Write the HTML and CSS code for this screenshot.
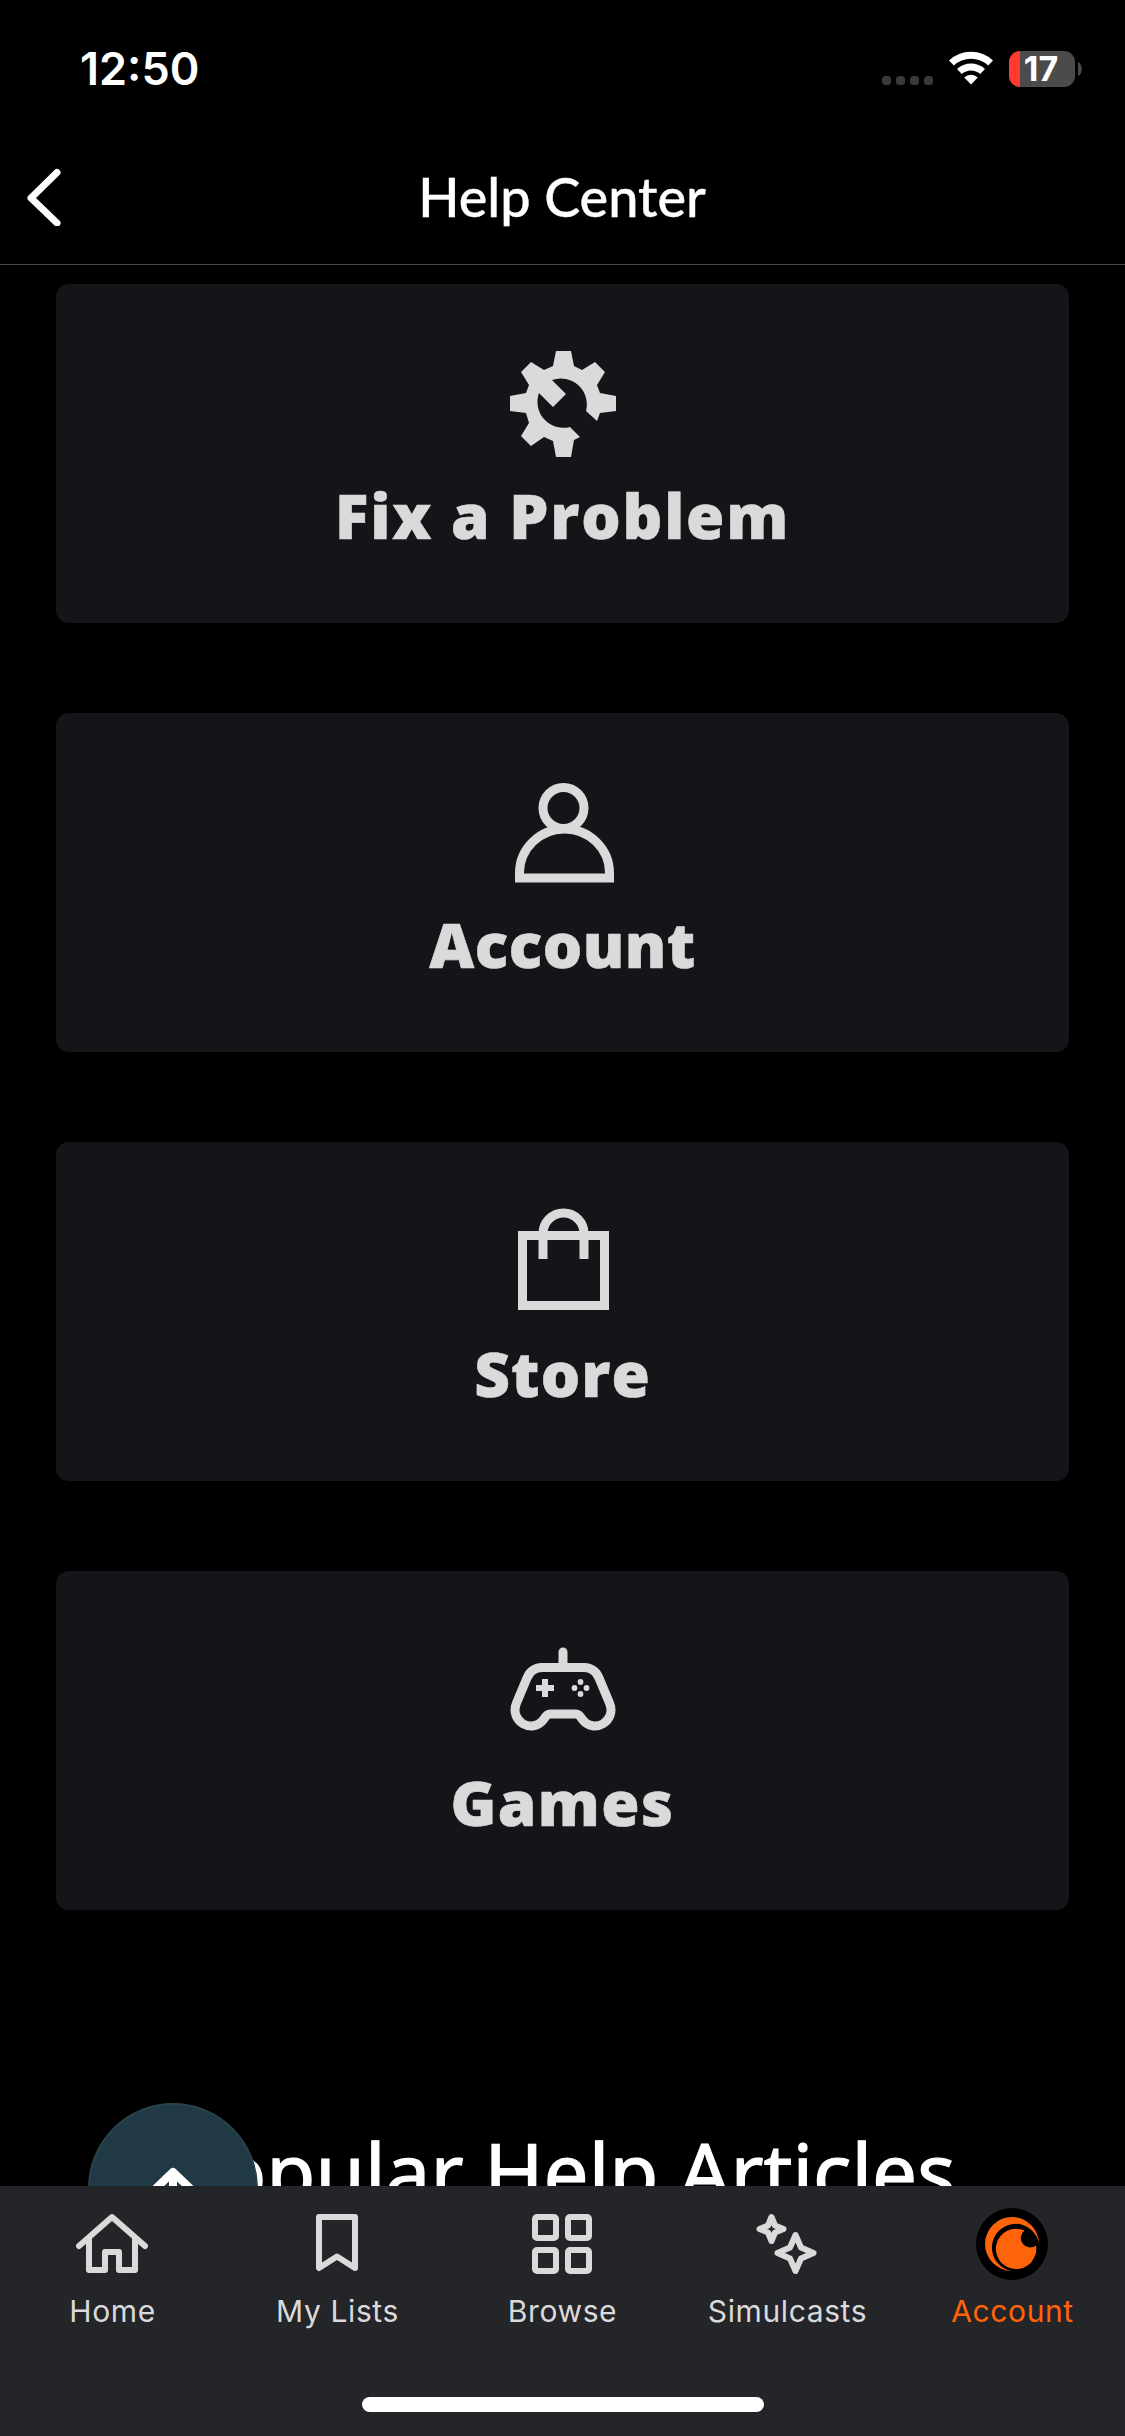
FILE: index.html
```html
<!DOCTYPE html>
<html lang="en">
<head>
<meta charset="utf-8">
<title>Help Center</title>
<link rel="stylesheet" href="styles.css">
</head>
<body>
<div class="screen">
  <div class="status">
    <span class="time">12:50</span>
    <div class="indicators">
      <svg class="dots" width="51" height="9" viewBox="0 0 51 9" fill="#3a3a3a"><rect width="9" height="9" rx="3.5"/><rect x="14" width="9" height="9" rx="3.5"/><rect x="28" width="9" height="9" rx="3.5"/><rect x="42" width="9" height="9" rx="3.5"/></svg>
      <svg class="wifi" width="46" height="34" viewBox="0 0 46 34" fill="none" stroke="#fff" stroke-width="7"><path d="M3.400 12a28.500 28.500 0 0 1 39.200 0"/><path d="M11.400 20.500a17 17 0 0 1 23.200 0"/><path d="M16.200 26.500a9.800 9.800 0 0 1 13.600 0L23 33.500z" fill="#fff" stroke="none"/></svg>
      <div class="battery"><span>17</span></div>
      <svg class="cap" width="4" height="14" viewBox="0 0 4 14"><path d="M0 0C5 2 5 12 0 14z" fill="#4b4b4b"/></svg>
    </div>
  </div>
  <header class="header">
    <svg class="back" width="34" height="58" viewBox="0 0 34 58" fill="none" stroke="#fff" stroke-width="7" stroke-linecap="round" stroke-linejoin="round"><path d="M30 4.500 4 30l26 25"/></svg>
    <h1>Help Center</h1>
  </header>
  <main class="content">
    <section class="card">
      <svg width="108" height="108" viewBox="0 0 108 108"><path fill="#dadadb" fill-rule="evenodd" d="M46 1H61L64 16 72 20 85 12 95 22 87 35 90 43 106 46V61L90 63 87 71 76 61A26 26 0 0 0 42 30L56 44 43 57 29 43A26 26 0 0 0 60 77L70 87 64 90 61 107H46L43 91 34 87 21 96 11 86 19 73 16 63 0 61V46L16 43 19 35 11 22 21 12 34 20 43 16Z"/></svg>
      <h2 class="t-fix">Fix a Problem</h2>
    </section>
    <section class="card">
      <svg width="108" height="108" viewBox="0 0 108 108" fill="none" stroke="#dadadb" stroke-width="9"><circle cx="53.500" cy="29" r="20.500"/><path d="M9.500 99v-5a45 44 0 0 1 90 0v5z"/></svg>
      <h2 class="t-account">Account</h2>
    </section>
    <section class="card">
      <svg width="108" height="108" viewBox="0 0 108 108" fill="none" stroke="#dadadb" stroke-width="9"><path d="M12.500 27.500h82v70H12.500zM33 51V25.500a20.500 20.500 0 0 1 41 0V51"/></svg>
      <h2 class="t-store">Store</h2>
    </section>
    <section class="card">
      <svg width="108" height="108" viewBox="0 0 108 108"><g fill="none" stroke="#dadadb" stroke-width="9" stroke-linejoin="round" stroke-linecap="round"><path d="M53 15v13"/><path d="M32 30.500H74Q85 31 89 41L99.500 66C107 84 84 98 72 82Q69 77 66 77H40Q37 77 34 82C22 98-1 84 6.500 66L17 41Q21 31 32 30.500z"/></g><g fill="#dadadb"><path d="M32 42h6v6h6v6h-6v6h-6v-6h-6v-6h6z"/><circle cx="70.500" cy="45" r="2.900"/><circle cx="70.500" cy="57" r="2.900"/><circle cx="64.500" cy="51" r="2.900"/><circle cx="76.500" cy="51" r="2.900"/></g></svg>
      <h2 class="t-games">Games</h2>
    </section>
    <h2 class="articles">Popular Help Articles</h2>
    <div class="top"><svg width="54" height="60" viewBox="0 0 54 60" fill="none" stroke="#fff" stroke-width="8" stroke-linejoin="round"><path d="M4 27 27 5l23 22M27 6v54"/></svg></div>
  </main>
  <nav class="tabs">
    <div class="tab"><svg width="72" height="72" viewBox="0 0 72 72" fill="none" stroke="#dadadb" stroke-width="6" stroke-linecap="round" stroke-linejoin="round"><path d="M3 38 36 9l33 29M13 30v32h16V44h14v18h16V30"/></svg><span>Home</span></div>
    <div class="tab"><svg width="72" height="72" viewBox="0 0 72 72" fill="none" stroke="#dadadb" stroke-width="6" stroke-linejoin="round"><path d="M18 9h36v51L36 48.500 18 60z"/></svg><span>My Lists</span></div>
    <div class="tab"><svg width="72" height="72" viewBox="0 0 72 72" fill="none" stroke="#dadadb" stroke-width="6"><rect x="9" y="9" width="21" height="21" rx="2"/><rect x="42" y="9" width="21" height="21" rx="2"/><rect x="9" y="42" width="21" height="21" rx="2"/><rect x="42" y="42" width="21" height="21" rx="2"/></svg><span>Browse</span></div>
    <div class="tab"><svg width="72" height="72" viewBox="0 0 72 72" fill="none" stroke="#dadadb" stroke-width="6" stroke-linejoin="round"><path d="M20.500 9 24 17.500 32.500 21 24 24.500 20.500 33 17 24.500 8.500 21 17 17.500z"/><path d="M44.500 27 50 39.500 62.500 45 50 50.500 44.500 63 39 50.500 26.500 45 39 39.500z"/></svg><span>Simulcasts</span></div>
    <div class="tab active"><svg width="72" height="72" viewBox="0 0 72 72"><circle cx="36" cy="36" r="36"/><path fill="#ff640a" d="M36 63A27 27 0 1 1 63 36A23.700 23.700 0 1 0 36 63z"/><path fill="#ff640a" d="M48.500 22.500A20.200 20.200 0 1 0 60 37.500A9.200 9.200 0 1 1 48.500 22.500z"/></svg><span>Account</span></div>
    <div class="home-bar"></div>
  </nav>
</div>
</body>
</html>
```
FILE: styles.css
```css
* { box-sizing: border-box; }
body { margin: 0; background: #000; }
h1, h2 { margin: 0; }
svg { display: block; flex: none; }
.screen { width: 1125px; height: 2436px; display: flex; flex-direction: column; background: #000; overflow: hidden; }
.status { height: 132px; flex: none; display: flex; justify-content: space-between; padding: 0 43px 0 80px; color: #fff; font-family: Inter, sans-serif; }
.time { font-size: 45px; font-weight: 600; line-height: 54px; padding-top: 42px; }
.indicators { display: flex; align-items: flex-start; padding-top: 51px; }
.dots { margin: 25px 15px 0 0; }
.wifi { margin-right: 15px; }
.battery { width: 66px; height: 36px; border-radius: 11px; background: linear-gradient(90deg, #ff3b30 11px, #4b4b4b 11px); font-size: 34px; font-weight: 700; line-height: 36px; text-align: center; padding-right: 2px; }
.cap { margin: 11px 0 0 3px; }
.header { height: 133px; flex: none; border-bottom: 1px solid #484848; display: flex; align-items: center; padding: 0 28px 2px 27px; color: #fff; }
.header h1 { flex: 1; text-align: center; font: 500 54px/66px Lato, sans-serif; padding-right: 34px; -webkit-text-stroke: 0.4px #fff; }
.content { position: relative; flex: 1; min-height: 0; overflow: hidden; padding: 19px 56px 0; display: flex; flex-direction: column; gap: 90px; }
.card { height: 339px; flex: none; background: #141519; border-radius: 13px; display: flex; flex-direction: column; align-items: center; padding-top: 66px; }
.card svg { margin-left: 3px; }
.card h2 { font: 800 62px/80px "Open Sans", sans-serif; color: #dadadb; margin-top: 17px; white-space: nowrap; -webkit-text-stroke: 0.6px #dadadb; }
.card .t-fix { letter-spacing: 1.8px; }
.card .t-account { letter-spacing: 0.5px; }
.card .t-store { letter-spacing: 1.1px; }
.card .t-games { letter-spacing: 1.4px; }
.articles { text-align: center; color: #fff; font: 400 80px/100px "Noto Sans", sans-serif; margin-top: 121px; white-space: nowrap; -webkit-text-stroke: 1.2px #fff; }
.top { position: absolute; left: 88px; top: 1838px; width: 170px; height: 170px; border-radius: 50%; background: #213944; border: 2px solid #29434d; display: flex; justify-content: center; padding-top: 62px; }
.tabs { height: 250px; flex: none; background: #242529; display: flex; flex-wrap: wrap; justify-content: center; align-content: flex-start; padding-top: 22px; }
.tab { width: 225px; display: flex; flex-direction: column; align-items: center; color: #dadadb; font: 400 30px/40px Inter, sans-serif; letter-spacing: 0.6px; padding-right: 1px; }
.tab span { margin: 11px 0 0 1px; }
.active { color: #ff640a; }
.home-bar { width: 402px; height: 15px; border-radius: 8px; background: #fff; margin-top: 66px; }
```
